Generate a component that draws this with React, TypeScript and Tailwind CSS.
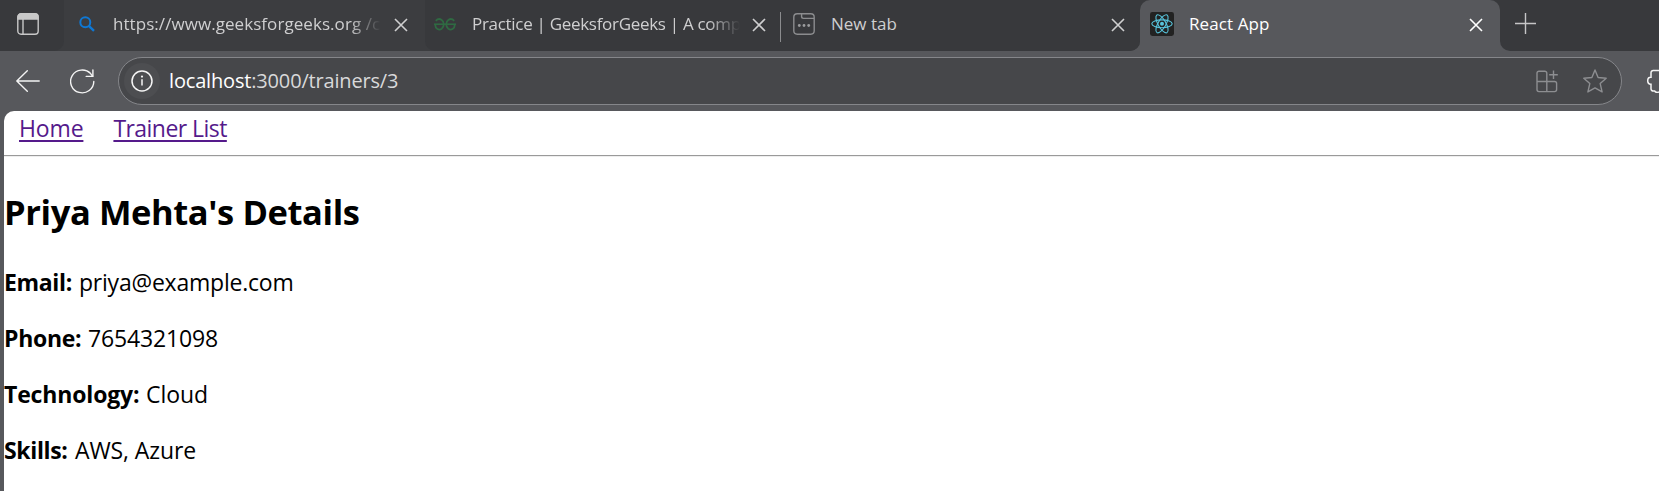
import React from "react";

const CloseIcon = ({ className = "" }: { className?: string }) => (
  <svg width="14" height="14" viewBox="0 0 14 14" fill="none" stroke="currentColor" strokeWidth="1.6" className={`shrink-0 ${className}`}>
    <path d="M1 1L13 13M13 1L1 13" />
  </svg>
);

const SidebarIcon = () => (
  <svg width="22" height="22" viewBox="0 0 22 22" fill="none" stroke="#c8c8c8" strokeWidth="1.4">
    <rect x="0.8" y="0.8" width="20.4" height="20.4" rx="3.2" />
    <path d="M1 6V4a3 3 0 0 1 3-3h14a3 3 0 0 1 3 3v2z" fill="#c8c8c8" />
    <path d="M6 6V21" />
  </svg>
);

const SearchIcon = () => (
  <svg width="16" height="16" viewBox="0 0 16 16" fill="none" stroke="#0f78d4" strokeWidth="2" className="shrink-0">
    <circle cx="6.3" cy="6.3" r="5" />
    <path d="M9.8 9.8L15 14.9" strokeWidth="2.4" />
  </svg>
);

const GeeksIcon = () => (
  <svg width="22" height="13" viewBox="0 0 22 13" fill="none" stroke="#2f6a42" strokeWidth="1.8" className="shrink-0">
    <path d="M0 6.2H22" strokeWidth="1.6" />
    <path d="M1.8 2.8C3.2 1.2 5.8 .7 7.7 1.9C10.5 3.7 10.4 8.9 7.7 10.8C5 12.6 1.2 10.8 1.2 6.4" />
    <path d="M20.2 2.8C18.8 1.2 16.2 .7 14.3 1.9C11.5 3.7 11.6 8.9 14.3 10.8C17 12.6 20.8 10.8 20.8 6.4" />
  </svg>
);

const NewTabIcon = () => (
  <svg width="22" height="22" viewBox="0 0 22 22" fill="none" stroke="#8b8c8e" strokeWidth="1.4" className="shrink-0">
    <rect x="0.8" y="0.8" width="20.4" height="20.4" rx="3.4" />
    <path d="M8.6 1V3.6a1.8 1.8 0 0 0 1.8 1.8H21" />
    <g fill="#9a9b9d" stroke="none">
      <circle cx="6.3" cy="12.5" r="1.4" />
      <circle cx="11" cy="12.5" r="1.4" />
      <circle cx="15.7" cy="12.5" r="1.4" />
    </g>
  </svg>
);

const ReactIcon = () => (
  <svg width="24" height="24" viewBox="0 0 24 24" fill="none" stroke="#58c4dc" strokeWidth="1.1" className="shrink-0">
    <rect width="24" height="24" rx="2.4" fill="#222222" stroke="none" />
    <ellipse cx="12" cy="11.8" rx="10.2" ry="3.9" />
    <ellipse cx="12" cy="11.8" rx="10.2" ry="3.9" transform="rotate(60 12 11.8)" />
    <ellipse cx="12" cy="11.8" rx="10.2" ry="3.9" transform="rotate(120 12 11.8)" />
    <circle cx="12" cy="11.8" r="2" fill="#58c4dc" stroke="none" />
  </svg>
);

const PlusIcon = () => (
  <svg width="21" height="21" viewBox="0 0 21 21" fill="none" stroke="#c6c6c7" strokeWidth="1.4">
    <path d="M10.5 0V21M0 10.5H21" />
  </svg>
);

const BackIcon = () => (
  <svg width="24" height="22" viewBox="0 0 24 22" fill="none" stroke="#f4f4f4" strokeWidth="1.4" strokeLinecap="round" strokeLinejoin="round" className="shrink-0">
    <path d="M23.2 11H.8M11.3 .8L.8 11L11.3 21.2" />
  </svg>
);

const ReloadIcon = () => (
  <svg width="25" height="25" viewBox="0 0 25 25" fill="none" stroke="#f4f4f4" strokeWidth="1.4" strokeLinecap="round" strokeLinejoin="round" className="shrink-0">
    <path d="M23.8 12.5A11.6 11.4 0 1 1 20.6 4.6L22.6 7.2" />
    <path d="M22.9 1V7.4H16.2" />
  </svg>
);

const InfoIcon = () => (
  <svg width="22" height="22" viewBox="0 0 22 22" fill="none" stroke="#f6f6f6" strokeWidth="1.5">
    <circle cx="11" cy="11" r="10" />
    <path d="M11 9.2V15.6" />
    <circle cx="11" cy="6.6" r="1.1" fill="#f6f6f6" stroke="none" />
  </svg>
);

const AppsIcon = () => (
  <svg width="22" height="23" viewBox="0 0 22 23" fill="none" stroke="#8d8e91" strokeWidth="1.4" className="shrink-0">
    <path d="M10.8 11.5V3.2A2 2 0 0 0 8.8 1.2H3A2 2 0 0 0 1 3.2V19.6A2 2 0 0 0 3 21.6H18.6A2 2 0 0 0 20.6 19.6V13.5A2 2 0 0 0 18.6 11.5H1M10.8 11.5V21.6" />
    <path d="M17.5 .4V9M13.2 4.7H21.8" />
  </svg>
);

const StarIcon = () => (
  <svg width="24" height="24" viewBox="0 0 24 24" fill="none" stroke="#8d8e91" strokeWidth="1.4" strokeLinejoin="round" className="shrink-0">
    <path d="M12 .9L15.1 8.5L23.2 9.2L17.2 14.6L19.1 22.9L12 18.9L4.9 22.9L6.8 14.6L.8 9.2L8.9 8.5Z" />
  </svg>
);

const ExtensionIcon = () => (
  <svg width="24" height="24" viewBox="0 0 24 24" fill="none" stroke="#f4f4f4" strokeWidth="1.5" className="shrink-0">
    <path d="M12 1.5H6.2A2.2 2.2 0 0 0 4 3.7V8.3H3.6A2.8 3.4 0 0 0 3.6 15.3H4V19.8A2.2 2.2 0 0 0 6.2 22H7.6A3.4 3 0 0 0 12 23" />
  </svg>
);

const Detail = ({ label, labelClass, value, valueClass }: { label: string; labelClass: string; value: string; valueClass: string }) => (
  <p className="flex h-8 text-[23px] leading-8 whitespace-pre">
    <strong className={`font-bold ${labelClass}`}>{label}</strong>
    <span className={valueClass}>{value}</span>
  </p>
);

export default function App() {
  return (
    <div className="flex h-[491px] w-full flex-col overflow-hidden bg-[#57585c] font-['Open_Sans','Noto_Sans',sans-serif]">
      <header className="flex h-[51px] shrink-0 text-[17px] leading-6 whitespace-nowrap text-[#cfcfd0]">
        <div className="flex w-[1140px] shrink-0 overflow-hidden rounded-br-[10px] bg-[#3c3d40]">
          <div className="flex w-16 shrink-0 rounded-br-[10px] bg-[#38393c] pt-[13px] pl-[17px]">
            <SidebarIcon />
          </div>
          <div className="flex w-[361px] shrink-0 items-center rounded-tr-[10px] pr-[17px] pb-[3px] pl-[15px]">
            <SearchIcon />
            <span className="ml-[18px] w-[268px] overflow-hidden [mask-image:linear-gradient(to_right,black_88%,transparent)] tracking-[0.06px]">
              https://www.geeksforgeeks.org /c
            </span>
            <CloseIcon className="mt-0.5 ml-[13px]" />
          </div>
          <div className="flex w-[357px] shrink-0 items-center rounded-bl-[10px] bg-[#38393c] pb-[3px] pl-[9px]">
            <GeeksIcon />
            <span className="ml-4 w-[268px] overflow-hidden [mask-image:linear-gradient(to_right,black_88%,transparent)] tracking-[-0.3px]">
              Practice | GeeksforGeeks | A comp
            </span>
            <CloseIcon className="mt-0.5 ml-3" />
            <span className="mt-1.5 ml-[14px] h-[30px] w-px shrink-0 bg-[#8b8c8e]" />
          </div>
          <div className="flex grow items-center bg-[#38393c] pb-[3px] pl-[11px]">
            <NewTabIcon />
            <span className="ml-4 grow">New tab</span>
            <CloseIcon className="mt-0.5 mr-[15px]" />
          </div>
        </div>
        <div className="w-[360px] shrink-0 bg-[#38393c]">
          <div className="flex h-full items-center rounded-t-[10px] bg-[#57585c] pr-[17px] pb-[3px] pl-[10px] text-white">
            <ReactIcon />
            <span className="ml-[15px] grow tracking-[0.1px]">React App</span>
            <CloseIcon className="mt-0.5" />
          </div>
        </div>
        <div className="grow rounded-bl-[10px] bg-[#38393c] pt-[13px] pl-[15px]">
          <PlusIcon />
        </div>
      </header>

      <div className="flex h-[60px] shrink-0 items-center overflow-hidden pl-4">
        <BackIcon />
        <span className="ml-[30px] flex">
          <ReloadIcon />
        </span>
        <div className="ml-[23px] flex h-12 w-[1504px] shrink-0 items-center rounded-full border border-[#85868a] bg-[#46474a] pr-[14px] pl-[5px]">
          <span className="flex size-9 items-center justify-center rounded-full bg-[#4d4e51]">
            <InfoIcon />
          </span>
          <span className="ml-[9px] grow text-[20px] leading-7 tracking-[-0.17px] text-[#d9d9da]">
            <span className="text-white">localhost</span>:3000/trainers/3
          </span>
          <AppsIcon />
          <span className="ml-[25px] flex">
            <StarIcon />
          </span>
        </div>
        <span className="ml-[25px] flex">
          <ExtensionIcon />
        </span>
      </div>

      <main className="ml-1 flex grow flex-col rounded-tl-[10px] bg-white text-black">
        <nav className="flex h-[44px] gap-[30px] pt-px pl-[15px] text-[23px] leading-8 whitespace-nowrap text-[#551a8b]">
          <a className="h-8 tracking-[-0.15px] underline decoration-[1.5px] underline-offset-[3px]">Home</a>
          <a className="h-8 tracking-[-0.55px] underline decoration-[1.5px] underline-offset-[3px]">Trainer List</a>
        </nav>
        <hr className="h-0.5 border-t border-b border-t-[#9a9a9a] border-b-[#eeeeee]" />
        <h2 className="mt-[31px] h-12 text-[34.5px] leading-[48px] font-bold tracking-[-0.4px]">Priya Mehta's Details</h2>
        <div className="mt-[30px] flex flex-col gap-6">
          <Detail label="Email:" labelClass="w-[75px] tracking-[-0.35px]" value="priya@example.com" valueClass="tracking-[-0.22px]" />
          <Detail label="Phone:" labelClass="w-[84px] tracking-[-0.3px]" value="7654321098" valueClass="tracking-[-0.15px]" />
          <Detail label="Technology:" labelClass="w-[142px] tracking-[-0.15px]" value="Cloud" valueClass="tracking-[-0.05px]" />
          <Detail label="Skills:" labelClass="w-[71px] tracking-[-0.35px]" value="AWS, Azure" valueClass="tracking-[-0.1px]" />
        </div>
      </main>
    </div>
  );
}
